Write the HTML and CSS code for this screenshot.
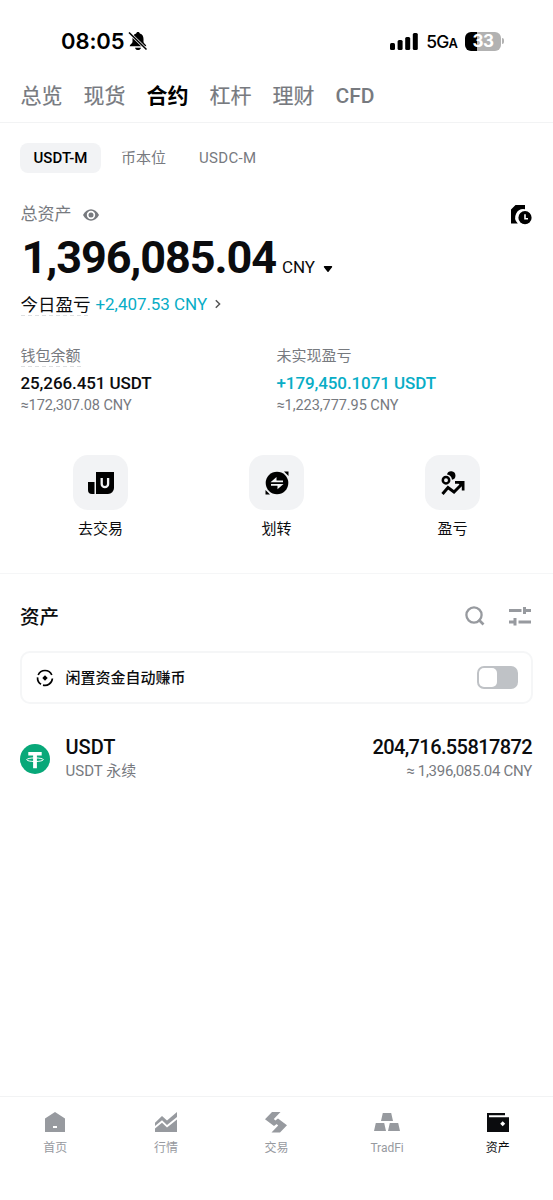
FILE: index.html
```html
<!DOCTYPE html>
<html lang="zh-CN">
<head>
<meta charset="utf-8">
<title>资产</title>
<link rel="stylesheet" href="styles.css">
</head>
<body>
<div class="app">
  <header class="status">
    <div class="status-left">
      <span class="time">08:05</span>
      <svg class="bell" width="20" height="20" viewBox="0 0 20 20"><path d="M10 1c-1 0-1.700.7-1.800 1.500C5.500 3.300 4.500 5.400 4.500 8v3c0 1.200-2.800 2.600-2.800 4.300h16.600c0-1.700-2.800-3.100-2.800-4.300V8c0-2.600-1-4.700-3.700-5.500C11.700 1.700 11 1 10 1zM7 16.700h6c-.4 1.500-1.500 2.300-3 2.300s-2.600-.8-3-2.300z"/><path d="M1 1.500 18.500 18.500" stroke="#fff" stroke-width="3"/><path d="M1 1.500 18.500 18.500" stroke="#000" stroke-width="1.600"/></svg>
    </div>
    <div class="status-right">
      <svg class="signal" width="28" height="17" viewBox="0 0 28 17"><rect x="0" y="10" width="5" height="7" rx="1.500"/><rect x="7.600" y="7" width="5" height="10" rx="1.500"/><rect x="15.200" y="4" width="5" height="13" rx="1.500"/><rect x="22.800" y="0" width="5" height="17" rx="1.500"/></svg>
      <span class="net">5G<small>A</small></span>
      <span class="battery">33</span><i class="nub"></i>
    </div>
  </header>

  <nav class="tabs">
    <span>总览</span><span>现货</span><span class="on">合约</span><span>杠杆</span><span>理财</span><span class="latin">CFD</span>
  </nav>

  <div class="subtabs">
    <span class="on">USDT-M</span><span class="coin">币本位</span><span class="usdc">USDC-M</span>
  </div>

  <section class="total">
    <div class="total-head">
      <span>总资产</span>
      <svg class="eye" width="16" height="12" viewBox="0 0 16 12"><path fill="#777a7f" fill-rule="evenodd" d="M0 6C2 2.400 4.800.3 8 .3S14 2.400 16 6c-2 3.600-4.800 5.700-8 5.700S2 9.600 0 6zm8-4.200a4.200 4.200 0 1 0 0 8.400 4.200 4.200 0 0 0 0-8.400z"/><circle cx="8" cy="6" r="2.500" fill="#777a7f"/></svg>
      <svg class="history" width="21" height="20" viewBox="0 0 21 20"><path d="M4.500 0H14v4.300A8.300 8.300 0 0 0 6.800 18.500H0V4.500z"/><circle cx="14" cy="12.700" r="6.600"/><path d="M14 9.200v4.500h3" fill="none" stroke="#fff" stroke-width="1.600"/></svg>
    </div>
    <div class="amount"><strong>1,396,085.04</strong><span>CNY</span><svg width="10" height="7" viewBox="0 0 10 7"><path d="M1.500.8h7L5 5.200z" stroke="#000" stroke-width="1.400" stroke-linejoin="round"/></svg></div>
    <div class="pnl"><span class="dashed">今日盈亏</span><span class="up">+2,407.53 CNY</span><svg width="6" height="10" viewBox="0 0 6 10"><path d="m.8 1.200 3.800 3.800L.8 8.800" fill="none" stroke="#555" stroke-width="1.500"/></svg></div>
  </section>

  <section class="figures">
    <div><label class="dashed">钱包余额</label><b class="balance">25,266.451 USDT</b><small>≈172,307.08 CNY</small></div>
    <div><label>未实现盈亏</label><b class="up">+179,450.1071 USDT</b><small>≈1,223,777.95 CNY</small></div>
  </section>

  <section class="actions">
    <div><span class="tile"><svg width="26" height="22" viewBox="0 0 26 22"><path d="M0 10h6.500v12H4a4 4 0 0 1-4-4zM8 0h18v16a6 6 0 0 1-6 6H8z"/><path d="M13.700 6v6a3.200 3.200 0 0 0 6.400 0V6" fill="none" stroke="#f2f3f5" stroke-width="2.300"/></svg></span><em>去交易</em></div>
    <div><span class="tile"><svg width="24" height="24" viewBox="0 0 24 24"><circle cx="12" cy="12" r="11.300"/><path d="M19 .5h4.500V5zM.5 19v4.500H5z"/><path d="M5.500 11.200 11.500 6v3.500h6.500v1.700zM18.500 13 12.500 18.200v-3.500H6V13z" fill="#f2f3f5"/></svg></span><em>划转</em></div>
    <div><span class="tile"><svg width="24" height="24" viewBox="0 0 24 24"><path d="M6 3.500a4.300 4.300 0 1 1 5 5.300A5.900 5.900 0 0 0 6 3.500z"/><circle cx="5" cy="9.200" r="3.200" fill="none" stroke="#000" stroke-width="2.500"/><path d="m1.500 23 5.500-6.500 6 4.500 7-7" fill="none" stroke="#000" stroke-width="3"/><path d="M14 10h9.500v9.500h-2.700v-4L17.500 12.700H14z"/></svg></span><em>盈亏</em></div>
  </section>

  <section class="assets">
    <div class="assets-head">
      <h2>资产</h2>
      <svg width="20" height="20" viewBox="0 0 20 20" fill="none" stroke="#979a9f"><circle cx="9" cy="9" r="7.600" stroke-width="2.300"/><path d="m13.500 13.500 5 5" stroke-width="2.700"/></svg>
      <svg width="22" height="20" viewBox="0 0 22 20" fill="#979a9f"><path d="M0 3h12.500v3H0zM14 1h3v2h5v3h-5v2h-3zM0 14.500h4.500v-2.500h3v7.500h-3v-2H0zM9.500 14.500H22v3H9.500z"/></svg>
    </div>
    <div class="auto-earn">
      <svg width="18" height="18" viewBox="0 0 18 18"><g fill="none" stroke="#000" stroke-width="1.700"><path d="M2.200 6A7.400 7.400 0 0 1 15.800 6M1.600 8.300A7.400 7.400 0 0 0 5 15.200M16.400 9.500A7.400 7.400 0 0 1 7 16.100"/></g><path d="M9 6.300 11.700 9 9 11.700 6.300 9z"/></svg>
      <span>闲置资金自动赚币</span>
      <i class="switch"></i>
    </div>
    <div class="asset">
      <svg width="30" height="30" viewBox="0 0 30 30"><circle cx="15" cy="15" r="15" fill="#08a879"/><path d="M8.300 8h13.400v3.500h-4.800v12.700h-3.800V11.500H8.300z" fill="#fff"/><ellipse cx="15" cy="15.700" rx="8.300" ry="1.800" fill="none" stroke="#fff" stroke-width="1"/></svg>
      <div class="asset-name"><b>USDT</b><small>USDT 永续</small></div>
      <div class="asset-value"><b>204,716.55817872</b><small>≈ 1,396,085.04 CNY</small></div>
    </div>
  </section>

  <footer class="tabbar">
    <div><svg width="22" height="22" viewBox="0 0 22 22"><path fill-rule="evenodd" d="M11 0 21 6.500V20H1V6.500zM9 14v2h4v-2z"/></svg><span>首页</span></div>
    <div><svg width="22" height="22" viewBox="0 0 22 22"><path d="M0 10.700 7 4l5 4.500L22 0v5L12 13 7 8.200 0 14zM0 16.500l7-5.800 5 4.800 10-8V20H0z"/></svg><span>行情</span></div>
    <div><svg width="22" height="22" viewBox="0 0 22 22"><path d="M7 0h8.500L8.800 7l4.200 4-4 3L0 7.300zM15 20.500H6.500l6.700-7L9 9.500l4-3 9 6.700z"/></svg><span>交易</span></div>
    <div><svg width="26" height="22" viewBox="0 0 26 22"><path d="M8.800 1h8.400L19 9H7zM1.800 11h8.400l1.800 8H0zM15.800 11h8.400l1.800 8H14z"/></svg><span>TradFi</span></div>
    <div class="on"><svg width="22" height="22" viewBox="0 0 22 22"><path fill-rule="evenodd" d="M0 1h18v2.200H2v2h20V20H0zM15.700 9.300 13.200 11.800l2.500 2.500 2.500-2.500z"/></svg><span>资产</span></div>
  </footer>
</div>
</body>
</html>
```
FILE: styles.css
```css
* { box-sizing: border-box; margin: 0; padding: 0; }
body { background: #fff; }
.app {
  width: 553px; height: 1200px; display: flex; flex-direction: column;
  overflow: hidden; color: #0b0c0e; background: #fff;
  font-family: Roboto, "Noto Sans CJK SC", sans-serif;
}
svg { display: block; flex: none; }
em, i { font-style: normal; }

.status { height: 70px; padding: 12px 49px 0 61px; display: flex; align-items: center; justify-content: space-between; color: #000; font-family: Inter, sans-serif; }
.status-left, .status-right { display: flex; align-items: center; }
.time { font-size: 22px; font-weight: 600; letter-spacing: -0.1px; }
.bell { margin-left: 4px; }
.net { margin-left: 8px; font-size: 17.500px; font-weight: 500; letter-spacing: -0.9px; }
.net small { font-size: 13px; font-weight: 600; }
.battery {
  margin-left: 8px; width: 36px; height: 19px; border-radius: 6px; color: #fff;
  background: linear-gradient(90deg, #000 34%, #b2b2b2 34%);
  font: 700 17px/19px Inter, sans-serif; text-align: center; letter-spacing: -0.5px;
}
.nub { width: 2px; height: 6px; margin-left: 1px; border-radius: 0 2px 2px 0; background: #b2b2b2; }

.tabs { height: 53px; padding-left: 20.500px; display: flex; gap: 21px; border-bottom: 1px solid #f2f3f4; color: #777a7f; font-size: 21px; line-height: 52px; -webkit-text-stroke: 0.2px; }
.tabs .on { font-weight: 700; color: #000; -webkit-text-stroke: 0; }
.tabs .latin { font-weight: 500; -webkit-text-stroke: 0; }

.subtabs { height: 71px; padding: 20px 0 0 20px; display: flex; color: #777a7f; font-size: 15px; line-height: 30px; }
.subtabs .on { width: 81px; height: 30px; border-radius: 8px; background: #f2f3f5; color: #000; text-align: center; font-weight: 500; }
.subtabs .coin { margin: 0 33px 0 20px; }
.subtabs .usdc { letter-spacing: 0.3px; }

.total { height: 146px; padding: 7px 21px 0 20.500px; }
.total-head { height: 27px; display: flex; align-items: center; color: #777a7f; font-size: 17px; line-height: 25px; }
.eye { margin-left: 11px; }
.history { margin-left: auto; }
.amount { height: 58px; padding: 1px 0 0 1px; display: flex; align-items: baseline; }
.amount strong { font-size: 45px; line-height: 58px; font-weight: 700; letter-spacing: -1.1px; }
.amount span { margin-left: 6px; font-size: 17px; }
.amount svg { margin-left: 8px; }
.pnl { height: 36px; display: flex; align-items: center; font-size: 17px; }
.pnl .dashed { margin-top: -2px; font-size: 17.500px; }
.pnl .up { margin-left: 5px; color: #08adc6; letter-spacing: -0.05px; }
.pnl svg { margin-left: 8px; }
.dashed { background: repeating-linear-gradient(90deg, #dcdee0 0 4px, transparent 4px 7px) left bottom / 100% 1px no-repeat; }

.figures { height: 115px; padding: 5px 20px 0 20.500px; display: grid; grid-template-columns: 256px 1fr; }
.figures > div { display: flex; flex-direction: column; align-items: flex-start; }
.figures label { font-size: 15px; line-height: 22px; color: #777a7f; }
.figures b { margin-top: 5px; font-size: 17px; line-height: 23px; font-weight: 500; letter-spacing: -0.1px; }
.figures .up { color: #08adc6; }
.figures small { font-size: 14.500px; line-height: 21px; color: #777a7f; letter-spacing: -0.06px; }

.actions { height: 119px; padding: 0 12px 0 12.500px; display: grid; grid-template-columns: repeat(3, 176px); border-bottom: 1px solid #f5f6f7; }
.actions > div { display: flex; flex-direction: column; align-items: center; }
.tile { width: 55px; height: 55px; border-radius: 15px; background: #f2f3f5; display: grid; place-items: center; }
.actions em { margin-top: 8px; font-size: 15px; line-height: 22px; }

.assets { flex: 1; padding: 0 20px; }
.assets-head { height: 77px; padding: 7px 2px 0 0; display: flex; align-items: center; }
.assets-head h2 { margin: -2px auto 0 0; font-size: 19.500px; font-weight: 500; }
.assets-head svg + svg { margin-left: 24px; }
.auto-earn { height: 53px; padding: 0 13px 0 14px; display: flex; align-items: center; border: 2px solid #f5f6f7; border-radius: 10px; font-size: 15px; font-weight: 500; }
.auto-earn span { margin: -2px 0 0 11.500px; }
.switch { margin-left: auto; width: 41px; height: 23px; padding: 2px; border-radius: 7px; background: #bfc2c6; }
.switch::before { content: ""; display: block; width: 18px; height: 19px; border-radius: 5px; background: #fff; }
.asset { margin-top: 29px; display: flex; align-items: center; height: 52px; }
.asset b { display: block; font-size: 20px; line-height: 26px; font-weight: 500; }
.asset small { display: block; font-size: 15px; line-height: 23px; color: #777a7f; }
.asset-name, .asset-value { margin-top: -1px; }
.asset-name { margin-left: 15.500px; }
.asset-value { margin-left: auto; padding-right: 1px; text-align: right; }
.asset-value b { letter-spacing: -0.6px; }
.asset-value small { letter-spacing: -0.28px; }

.tabbar { height: 104px; padding-top: 15px; border-top: 1px solid #f2f3f4; display: grid; grid-template-columns: repeat(5, 1fr); color: #979a9f; font-size: 12px; }
.tabbar > div { display: flex; flex-direction: column; align-items: center; }
.tabbar svg { fill: #979a9f; }
.tabbar span { margin-top: 5px; line-height: 18px; }
.tabbar .on { color: #0b0c0e; }
.tabbar .on svg { fill: #0b0c0e; }
```
